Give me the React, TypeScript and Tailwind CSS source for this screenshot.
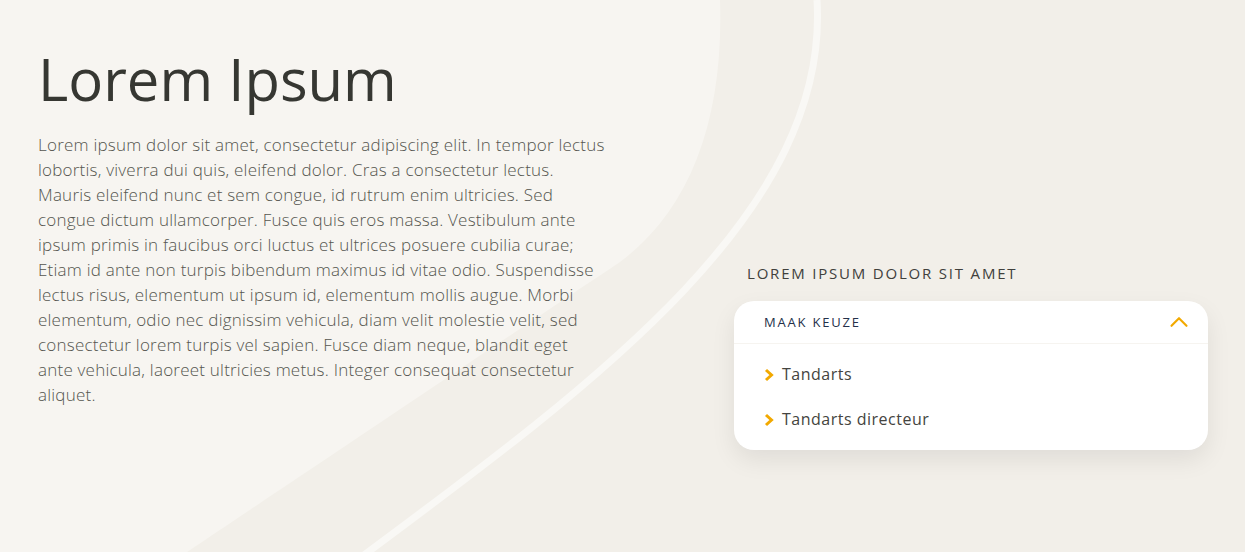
import { ChevronUp } from "lucide-react";

const options = ["Tandarts", "Tandarts directeur"];

const lines = [
  "Lorem ipsum dolor sit amet, consectetur adipiscing elit. In tempor lectus",
  "lobortis, viverra dui quis, eleifend dolor. Cras a consectetur lectus.",
  "Mauris eleifend nunc et sem congue, id rutrum enim ultricies. Sed",
  "congue dictum ullamcorper. Fusce quis eros massa. Vestibulum ante",
  "ipsum primis in faucibus orci luctus et ultrices posuere cubilia curae;",
  "Etiam id ante non turpis bibendum maximus id vitae odio. Suspendisse",
  "lectus risus, elementum ut ipsum id, elementum mollis augue. Morbi",
  "elementum, odio nec dignissim vehicula, diam velit molestie velit, sed",
  "consectetur lorem turpis vel sapien. Fusce diam neque, blandit eget",
  "ante vehicula, laoreet ultricies metus. Integer consequat consectetur",
  "aliquet.",
];

const Background = () => (
  <svg
    className="absolute inset-0 w-full h-full"
    viewBox="0 0 1245 552"
    preserveAspectRatio="none"
  >
    <path
      d="M0,0 L720,0 C724,120 690,210 620,262 C500,342 277,492 187,552 L0,552 Z"
      fill="#f7f5f1"
    />
    <path
      d="M817,0 C830,210 600,380 360,558"
      fill="none"
      stroke="#f9f8f5"
      strokeWidth="7"
    />
  </svg>
);

const Arrow = () => (
  <svg width="10" height="14" viewBox="0 0 10 14" className="shrink-0">
    <polyline points="2,2 7.5,7 2,12" fill="none" stroke="#f2a900" strokeWidth="3" />
  </svg>
);

export default function App() {
  return (
    <div className="relative w-full h-[552px] overflow-hidden bg-[#f2efe9] font-['Open_Sans',sans-serif]">
      <Background />
      <div className="relative flex h-full">
        {/* left text */}
        <div className="w-[600px] ml-[38px] pt-[43px] shrink-0">
          <h1 className="text-[58px] leading-[72px] font-normal text-[#363732]">
            Lorem Ipsum
          </h1>
          <p className="mt-[17px] text-[17px] leading-[25px] font-light tracking-[0.22px] text-[#55554f] whitespace-nowrap">
            {lines.map((l, i) => (
              <span key={i} className="block">
                {l}
              </span>
            ))}
          </p>
        </div>

        {/* right form */}
        <div className="ml-[96px] pt-[262px] w-[474px]">
          <p className="pl-[13px] text-[15px] leading-[22px] tracking-[1.8px] text-[#40403c] uppercase">
            Lorem ipsum dolor sit amet
          </p>
          <div className="mt-[17px] bg-white rounded-[20px] shadow-[0_10px_24px_rgba(0,0,0,0.08)]">
            <div className="flex items-center justify-between pl-[30px] pr-[14px] h-[43px] border-b border-[#f6f4f0]">
              <span className="pt-[2px] text-[13px] tracking-[1.8px] text-[#24304a] uppercase">
                Maak keuze
              </span>
              <ChevronUp className="w-[30px] h-[30px] text-[#f2a900]" strokeWidth={1.7} />
            </div>
            <ul className="pl-[30px] pr-[28px] pt-[19px] pb-[19px] flex flex-col gap-[22px]">
              {options.map((o) => (
                <li
                  key={o}
                  className="flex items-center gap-[8px] text-[16px] leading-[23px] tracking-[0.5px] text-[#444440]"
                >
                  <Arrow />
                  {o}
                </li>
              ))}
            </ul>
          </div>
        </div>
      </div>
    </div>
  );
}
